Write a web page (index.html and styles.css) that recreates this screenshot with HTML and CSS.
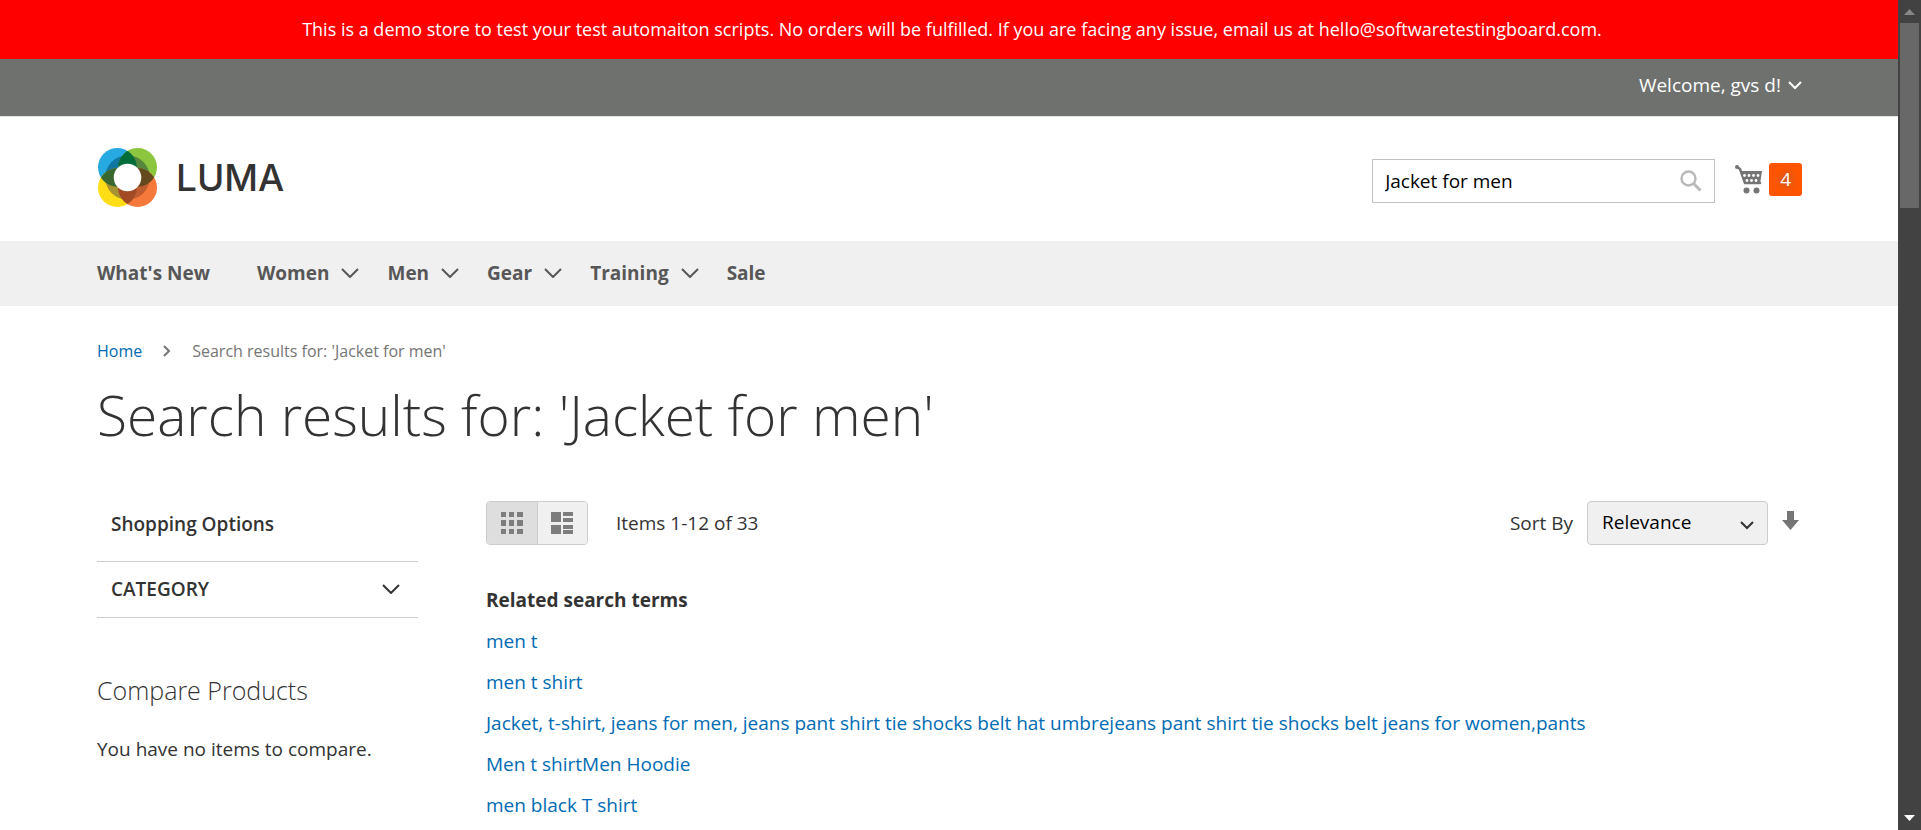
FILE: index.html
```html
<!DOCTYPE html>
<html lang="en">
<head>
<meta charset="utf-8">
<title>Search results for: 'Jacket for men'</title>
<link rel="stylesheet" href="styles.css">
</head>
<body>
<div class="window">
  <div class="page">
    <p class="notice">This is a demo store to test your test automaiton scripts. No orders will be fulfilled. If you are facing any issue, email us at hello@softwaretestingboard.com.</p>
    <header>
      <div class="panel">
        <button class="welcome" type="button">Welcome, gvs d!
          <svg width="14" height="9" viewBox="0 0 14 9" fill="none" stroke="currentColor" stroke-width="2"><path d="M1 1l6 6 6-6"/></svg>
        </button>
      </div>
      <div class="masthead">
        <a class="logo" href="#" aria-label="Luma home">
          <svg class="mark" width="59" height="59" viewBox="0 0 60 60">
            <defs>
              <clipPath id="blue"><circle cx="19.7" cy="19.7" r="19.7"/></clipPath>
              <clipPath id="green"><circle cx="40.3" cy="19.7" r="19.7"/></clipPath>
              <clipPath id="yellow"><circle cx="19.7" cy="40.3" r="19.7"/></clipPath>
              <clipPath id="orange"><circle cx="40.3" cy="40.3" r="19.7"/></clipPath>
            </defs>
            <circle cx="19.7" cy="19.7" r="19.7" fill="#27a9e1"/>
            <circle cx="40.3" cy="19.7" r="19.7" fill="#8cc63f"/>
            <circle cx="19.7" cy="40.3" r="19.7" fill="#ffde17"/>
            <circle cx="40.3" cy="40.3" r="19.7" fill="#f4793b"/>
            <circle cx="30" cy="30" r="22.7" fill="#1176a0" clip-path="url(#blue)"/>
            <circle cx="30" cy="30" r="22.7" fill="#56863d" clip-path="url(#green)"/>
            <circle cx="30" cy="30" r="22.7" fill="#a69332" clip-path="url(#yellow)"/>
            <circle cx="30" cy="30" r="22.7" fill="#bf5c30" clip-path="url(#orange)"/>
            <g clip-path="url(#blue)"><circle cx="40.3" cy="19.7" r="19.7" fill="#006d3a"/><circle cx="19.7" cy="40.3" r="19.7" fill="#38682f"/></g>
            <g clip-path="url(#orange)"><circle cx="40.3" cy="19.7" r="19.7" fill="#64491f"/><circle cx="19.7" cy="40.3" r="19.7" fill="#a24a24"/></g>
            <circle cx="30" cy="30" r="14" fill="#fff"/>
          </svg>
          <span class="wordmark">LUMA</span>
        </a>
        <div class="tools">
          <form class="search">
            <input type="text" aria-label="Search" value="Jacket for men">
            <button type="button" aria-label="Search"><svg width="22" height="22" viewBox="0 0 22 22" fill="none" stroke="#b9b9b9"><circle cx="8.500" cy="8.500" r="7" stroke-width="2.400"/><path d="M13.500 13.500l7 7" stroke-width="3"/></svg></button>
          </form>
          <a class="cart" href="#" aria-label="My cart">
            <svg width="28" height="29" viewBox="0 0 28 29" fill="#757575"><path d="M2 2l3 2 5 14h15" fill="none" stroke="#757575" stroke-width="2.500" stroke-linecap="round"/><circle cx="2" cy="2" r="2"/><path d="M5.500 6H27l-2 13H9.500z"/><g fill="#fff"><circle cx="9.500" cy="10.500" r="1.400"/><circle cx="14" cy="10.500" r="1.400"/><circle cx="18.500" cy="10.500" r="1.400"/><circle cx="23" cy="10.500" r="1.400"/><circle cx="12" cy="15.500" r="1.400"/><circle cx="16.500" cy="15.500" r="1.400"/><circle cx="21" cy="15.500" r="1.400"/></g><circle cx="11.500" cy="25.500" r="3"/><circle cx="21.500" cy="25.500" r="3"/></svg>
            <span class="count">4</span>
          </a>
        </div>
      </div>
    </header>
    <nav class="menu">
      <a class="plain" href="#">What's New</a>
      <a href="#">Women <svg class="caret" viewBox="0 0 18 10"><path d="M1 1l8 8 8-8"/></svg></a>
      <a href="#">Men <svg class="caret" viewBox="0 0 18 10"><path d="M1 1l8 8 8-8"/></svg></a>
      <a href="#">Gear <svg class="caret" viewBox="0 0 18 10"><path d="M1 1l8 8 8-8"/></svg></a>
      <a href="#">Training <svg class="caret" viewBox="0 0 18 10"><path d="M1 1l8 8 8-8"/></svg></a>
      <a href="#">Sale</a>
    </nav>
    <main class="content">
      <div class="crumbs"><a href="#">Home</a><svg width="8" height="12" viewBox="0 0 8 12" fill="none" stroke="#757575" stroke-width="2"><path d="M1 1l5 5-5 5"/></svg><span>Search results for: 'Jacket for men'</span></div>
      <h1>Search results for: 'Jacket for men'</h1>
      <div class="columns">
        <aside>
          <h2 class="options">Shopping Options</h2>
          <button class="category" type="button">CATEGORY <svg class="caret" viewBox="0 0 18 10"><path d="M1 1l8 8 8-8"/></svg></button>
          <h2 class="compare">Compare Products</h2>
          <p class="empty">You have no items to compare.</p>
        </aside>
        <section class="results">
          <div class="toolbar">
            <div class="modes">
              <button class="on" type="button" aria-label="Grid"><svg width="22" height="22" viewBox="0 0 22 22" fill="#7d7d7d"><path d="M0 0h5v5H0zM8 0h5v5H8zM16 0h6v5h-6zM0 8h5v6H0zM8 8h5v6H8zM16 8h6v6h-6zM0 17h5v5H0zM8 17h5v5H8zM16 17h6v5h-6z"/></svg></button>
              <button type="button" aria-label="List"><svg width="22" height="22" viewBox="0 0 22 22" fill="#7d7d7d"><path d="M0 0h10v10H0zM12 0h10v4H12zM12 6h10v4H12zM0 13h10v9H0zM12 13h10v4H12zM12 18h10v4H12z"/></svg></button>
            </div>
            <span>Items 1-12 of 33</span>
            <div class="sort">
              <label for="sorter">Sort By</label>
              <div class="select"><select id="sorter"><option>Relevance</option></select><svg width="14" height="9" viewBox="0 0 14 9" fill="none" stroke="#333" stroke-width="2"><path d="M1 1l6 6 6-6"/></svg></div>
              <a class="direction" href="#" aria-label="Set descending direction"><svg width="17" height="19" viewBox="0 0 17 19" fill="#757575"><path d="M5 0h7v9h5l-8.500 10L0 9h5z"/></svg></a>
            </div>
          </div>
          <h2 class="related">Related search terms</h2>
          <ul class="terms">
            <li><a href="#">men t</a></li>
            <li><a href="#">men t shirt</a></li>
            <li><a href="#">Jacket, t-shirt, jeans for men, jeans pant shirt tie shocks belt hat umbrejeans pant shirt tie shocks belt jeans for women,pants</a></li>
            <li><a href="#">Men t shirtMen Hoodie</a></li>
            <li><a href="#">men black T shirt</a></li>
          </ul>
        </section>
      </div>
    </main>
  </div>
  <div class="scrollbar"><svg width="11" height="6" viewBox="0 0 11 6" fill="#868686"><path d="M0 6h11L5.500 0z"/></svg><div class="thumb"></div><svg width="11" height="6" viewBox="0 0 11 6" fill="#fff"><path d="M0 0h11L5.500 6z"/></svg></div>
</div>
</body>
</html>
```
FILE: styles.css
```css
* { box-sizing: border-box; }
body { margin: 0; background: #fff; color: #333; font: 19px/26px "Open Sans", "Noto Sans", sans-serif; }
h1, h2, p, ul { margin: 0; padding: 0; }
a { color: #006bb4; text-decoration: none; }
button, input, select { font: inherit; color: inherit; margin: 0; }
button { border: 0; padding: 0; background: none; }
svg { display: block; flex: none; }

.window { display: flex; height: 100vh; overflow: hidden; }
.page { flex: 1; min-width: 0; overflow: hidden; }
.notice { padding: 16px 16px 16px 22px; background: #f00; color: #fff; text-align: center; font-size: 18px; line-height: 27px; }

.panel { display: flex; justify-content: flex-end; padding: 13px 96px 18px; background: #6e716e; border-bottom: 1px solid #e5e5e5; }
.welcome { display: flex; align-items: center; gap: 7px; color: #fff; }
.masthead { display: flex; justify-content: space-between; align-items: flex-start; padding: 31px 96px 34px 98px; }
.logo { display: flex; align-items: center; gap: 19px; }
.wordmark { color: #333; font: 500 37px/40px Inter, Lato, sans-serif; }
.tools { display: flex; align-items: center; gap: 20px; padding-top: 11px; }
.search { display: flex; align-items: center; width: 343px; height: 44px; padding: 0 12px; border: 1px solid #c2c2c2; }
.search input { flex: 1; min-width: 0; border: 0; padding: 0; outline: 0; color: #000; }
.cart { display: flex; align-items: center; gap: 6px; padding-bottom: 3px; }
.count { padding: 3px 11px 4px; border-radius: 3px; background: #ff5501; color: #fff; text-shadow: 0 0 8px #666; }

.menu { display: flex; gap: 28px; padding: 19px 97px 20px; background: #f0f0f0; font-weight: 700; }
.menu a { display: flex; align-items: center; gap: 12px; color: #575757; }
.menu .plain { margin-right: 19px; }
.caret { width: 18px; height: 10px; fill: none; stroke: currentColor; stroke-width: 2; }

.content { padding: 32px 96px 0 97px; }
.crumbs { display: flex; align-items: center; gap: 21px; font-size: 16px; color: #757575; }
h1 { margin-top: 21px; font-size: 55px; line-height: 60px; font-weight: 300; }
.columns { display: grid; grid-template-columns: 321px minmax(0, 1fr); gap: 68px; margin-top: 56px; }
h2 { font-size: 19px; }
.options { padding: 10px 14px 24px; font-weight: 600; }
.category { display: flex; justify-content: space-between; align-items: center; width: 100%; padding: 14px 18px 15px 14px; border: solid #ccc; border-width: 1px 0; font-weight: 600; }
.compare { margin-top: 59px; font-size: 25px; font-weight: 300; }
.empty { margin-top: 33px; }

.toolbar { display: flex; align-items: center; gap: 28px; }
.modes { display: flex; width: 102px; height: 44px; border: 1px solid #ccc; border-radius: 4px; overflow: hidden; }
.modes button { display: grid; place-items: center; flex: 1; background: #f0f0f0; }
.modes .on { background: #dedede; border-right: 1px solid #ccc; }
.sort { display: flex; align-items: center; gap: 14px; margin-left: auto; }
.select { position: relative; }
.select select { display: block; width: 181px; height: 44px; padding: 0 14px 3px; appearance: none; background: #f0f0f0; border: 1px solid #ccc; border-radius: 4px; color: #000; }
.select svg { position: absolute; right: 14px; top: 20px; pointer-events: none; }
.direction { padding: 0 3px 5px 0; }
.related { margin-top: 42px; font-weight: 700; }
.terms { display: grid; gap: 15px; margin-top: 15px; list-style: none; }

.scrollbar { display: flex; flex-direction: column; align-items: center; width: 23px; padding: 9px 0; background: #424242; }
.thumb { width: 19px; height: 185px; margin: 8px 0 auto; background: #686868; }
```
